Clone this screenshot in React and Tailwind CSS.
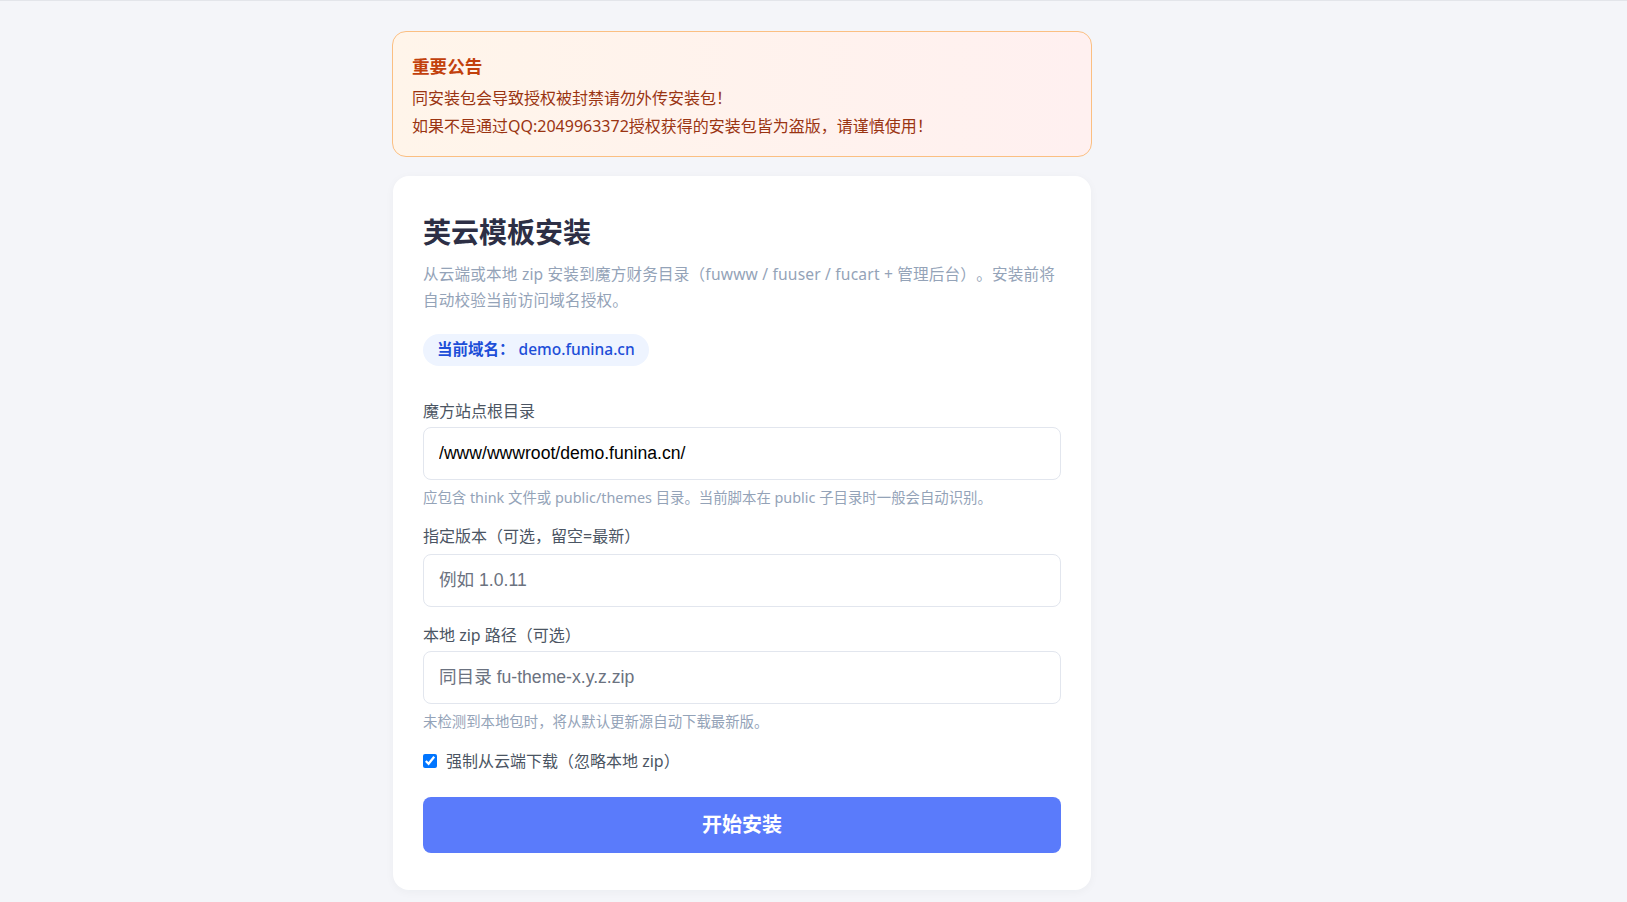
import React, { useState } from 'react'

// 字体栈：中文优先 Noto Sans CJK，标点保持全宽
const cjk = 'font-["Noto_Sans","Noto_Sans_CJK_SC",sans-serif] [text-spacing-trim:space-all]'
const inputFont = 'font-["Liberation_Sans","Noto_Sans_CJK_SC",sans-serif]'

const inputCls = `block h-[53px] w-full rounded-[8px] border border-[#e2e6ee] px-[15px] text-[17.6px] text-black placeholder:text-[#6b7280] outline-none ${inputFont}`

function Field({ label, children, hint, first }) {
  return (
    <div className={first ? 'mt-[34px]' : 'mt-[17px]'}>
      <div className="text-[16px] leading-[22px] text-[#4b5563]">{label}</div>
      {children}
      {hint && (
        <div className="mt-[8px] text-[14.4px] leading-[20px] text-[#94a3b8]">{hint}</div>
      )}
    </div>
  )
}

export default function App() {
  const [root, setRoot] = useState('/www/wwwroot/demo.funina.cn/')
  const [version, setVersion] = useState('')
  const [zipPath, setZipPath] = useState('')
  const [forceCloud, setForceCloud] = useState(true)

  return (
    <div className={`min-h-screen bg-[#f4f5f9] border-t border-[#e3e5ea] ${cjk}`}>
      <div className="ml-[392px] w-[700px] pt-[30px] pb-[14px]">
        {/* 公告 */}
        <div className="rounded-[14px] border border-[#fbbf82] bg-gradient-to-r from-[#fff5ea] to-[#fff0f0] px-[19px] pt-[22px] pb-[16px]">
          <div className="text-[17.6px] leading-[24px] font-bold text-[#c2410c]">重要公告</div>
          <div className="mt-[6px] text-[16px] leading-[28px] text-[#9a3412]">
            <div>同安装包会导致授权被封禁请勿外传安装包！</div>
            <div>如果不是通过QQ:2049963372授权获得的安装包皆为盗版，请谨慎使用！</div>
          </div>
        </div>

        {/* 安装卡片 */}
        <div className="mx-px mt-[19px] rounded-[16px] bg-white shadow-[0_2px_10px_rgba(30,41,59,0.04)] px-[30px] pt-[38px] pb-[37px]">
          <h1 className="text-[28px] leading-[36px] font-bold text-[#2d2f45]">芙云模板安装</h1>
          <p className="mt-[11px] text-[15.6px] leading-[26px] tracking-[0.18px] text-[#94a3b8]">
            从云端或本地 zip 安装到魔方财务目录（fuwww / fuuser / fucart + 管理后台）。安装前将自动校验当前访问域名授权。
          </p>

          <div className="mt-[21px] inline-flex h-[32px] items-center rounded-full bg-[#eef4ff] px-[14px] text-[15.5px]">
            <span className="font-bold text-[#1d4ed8]">当前域名：</span>
            <span className="ml-[4px] font-medium text-[#1d4ed8]">demo.funina.cn</span>
          </div>

          <Field
            first
            label="魔方站点根目录"
            hint="应包含 think 文件或 public/themes 目录。当前脚本在 public 子目录时一般会自动识别。"
          >
            <input value={root} onChange={e => setRoot(e.target.value)} className={`mt-[5px] ${inputCls}`} />
          </Field>

          <Field label="指定版本（可选，留空=最新）">
            <input
              value={version}
              onChange={e => setVersion(e.target.value)}
              placeholder="例如 1.0.11"
              className={`mt-[7px] ${inputCls}`}
            />
          </Field>

          <Field
            label="本地 zip 路径（可选）"
            hint="未检测到本地包时，将从默认更新源自动下载最新版。"
          >
            <input
              value={zipPath}
              onChange={e => setZipPath(e.target.value)}
              placeholder="同目录 fu-theme-x.y.z.zip"
              className={`mt-[5px] ${inputCls}`}
            />
          </Field>

          <label className="mt-[18px] flex items-center gap-[9px] text-[16px] leading-[22px] text-[#4b5563]">
            <input
              type="checkbox"
              checked={forceCloud}
              onChange={e => setForceCloud(e.target.checked)}
              className="m-0 h-[14px] w-[14px]"
            />
            强制从云端下载（忽略本地 zip）
          </label>

          <button className="mt-[25px] block h-[56px] w-full rounded-[8px] bg-[#5a7bfb] text-[20px] font-bold text-white">
            开始安装
          </button>
        </div>
      </div>
    </div>
  )
}
